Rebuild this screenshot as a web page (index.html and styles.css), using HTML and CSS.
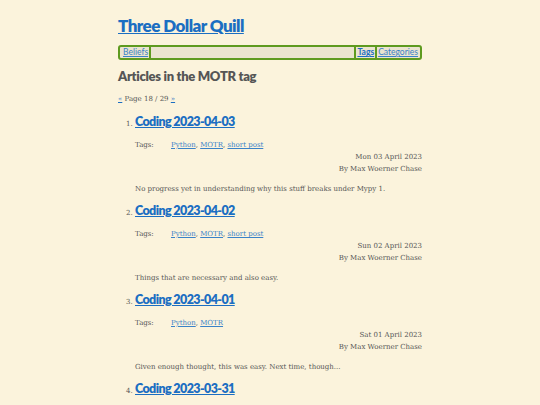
FILE: index.html
```html
<!DOCTYPE html>
<html>
<head>
<meta charset="utf-8">
<link rel="stylesheet" href="styles.css">
</head>
<body>
<div class="page">
  <header class="site-header">
    <a class="site-title" href="#">Three Dollar Quill</a>
  </header>
  <nav class="menu">
    <a class="menu-link" href="#">Beliefs</a>
    <span class="menu-spacer"></span>
    <a class="menu-link active" href="#">Tags</a>
    <a class="menu-link last" href="#">Categories</a>
  </nav>
  <h2 class="section-title">Articles in the MOTR tag</h2>
  <p class="pager"><a href="#">«</a> Page 18 / 29 <a href="#">»</a></p>
  <ol class="articles" start="1">
    <li class="article">
      <a class="article-title" href="#">Coding 2023-04-03</a>
      <div class="tags"><span class="tags-label">Tags:</span><span><a href="#">Python</a>, <a href="#">MOTR</a>, <a href="#">short post</a></span></div>
      <div class="meta"><div>Mon 03 April 2023</div><div>By Max Woerner Chase</div></div>
      <p class="summary">No progress yet in understanding why this stuff breaks under Mypy 1.</p>
    </li>
    <li class="article">
      <a class="article-title" href="#">Coding 2023-04-02</a>
      <div class="tags"><span class="tags-label">Tags:</span><span><a href="#">Python</a>, <a href="#">MOTR</a>, <a href="#">short post</a></span></div>
      <div class="meta"><div>Sun 02 April 2023</div><div>By Max Woerner Chase</div></div>
      <p class="summary">Things that are necessary and also easy.</p>
    </li>
    <li class="article">
      <a class="article-title" href="#">Coding 2023-04-01</a>
      <div class="tags"><span class="tags-label">Tags:</span><span><a href="#">Python</a>, <a href="#">MOTR</a></span></div>
      <div class="meta"><div>Sat 01 April 2023</div><div>By Max Woerner Chase</div></div>
      <p class="summary">Given enough thought, this was easy. Next time, though...</p>
    </li>
    <li class="article">
      <a class="article-title" href="#">Coding 2023-03-31</a>
    </li>
  </ol>
</div>
</body>
</html>
```

FILE: styles.css
```css
html, body {
  margin: 0;
  padding: 0;
  background: #fbf3dc;
}
body {
  font-family: "DejaVu Serif", serif;
  color: #555;
  font-size: 8px;
}
.page {
  width: 304px;
  margin: 0 auto;
}
a {
  color: #1b6ec2;
}
.site-header {
  padding-top: 15px;
  height: 30px;
}
.site-title {
  font-family: Lato, sans-serif;
  font-weight: 800;
  font-size: 17px;
  line-height: 22px;
  letter-spacing: -0.55px;
  color: #1b6ec2;
}
.menu {
  display: flex;
  align-items: center;
  height: 11px;
  border: 2px solid #5e9a1f;
  border-radius: 3px;
  background: #ebe4cf;
  font-family: Lato, sans-serif;
  font-size: 8.5px;
  padding: 0 1px 0 2px;
}
.menu-link {
  padding: 0 1px;
  border-right: 2px solid #5e9a1f;
  line-height: 11px;
  color: #3a82c8;
}
.menu-link.active {
  font-weight: 700;
  border-left: 2px solid #5e9a1f;
  color: #1b6ec2;
}
.menu-link.last {
  border-right: none;
}
.menu-spacer {
  flex: 1;
}
.section-title {
  font-family: Lato, sans-serif;
  font-weight: 800;
  font-size: 13px;
  line-height: 16px;
  letter-spacing: -0.3px;
  margin: 8px 0 0;
  color: #555;
}
.pager {
  margin: 9px 0 0;
  font-size: 7px;
  line-height: 12px;
}
.articles {
  margin: 9px 0 0;
  padding-left: 17px;
  font-size: 7px;
}
.article {
  height: 89px;
}
.article::marker {
  font-size: 7px;
}
.article-title {
  font-family: Lato, sans-serif;
  font-weight: 800;
  font-size: 12.5px;
  line-height: 16px;
  letter-spacing: -0.6px;
}
.tags {
  display: flex;
  margin-top: 9px;
  line-height: 12px;
}
.tags-label {
  width: 36px;
}
.tags a {
  color: #3a82c8;
}
.meta {
  text-align: right;
  line-height: 12px;
}
.summary {
  margin: 8px 0 0;
  line-height: 12px;
}
```
